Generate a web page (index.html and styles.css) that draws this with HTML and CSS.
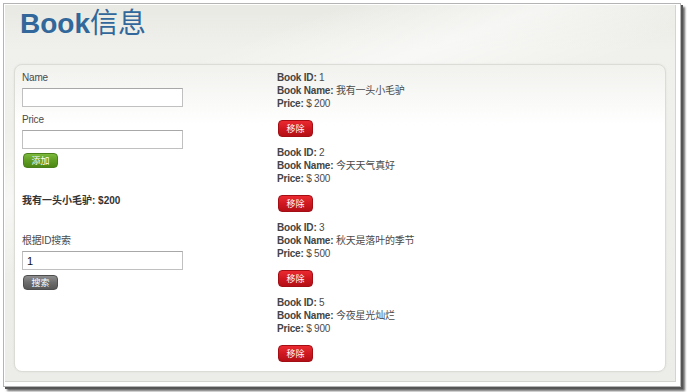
FILE: index.html
```html
<!DOCTYPE html>
<html>
<head>
<meta charset="utf-8">
<link rel="stylesheet" href="styles.css">
</head>
<body>
<div class="frame">
  <div class="page">
    <h1 class="title">Book<span class="title-cjk">信息</span></h1>
    <div class="card">
      <div class="form-col">
        <div class="label">Name</div>
        <input class="field" type="text">
        <div class="label label-next">Price</div>
        <input class="field" type="text">
        <button class="btn btn-green">添加</button>
        <div class="summary">我有一头小毛驴: $200</div>
        <div class="label label-search">根据ID搜索</div>
        <input class="field" type="text" value="1">
        <button class="btn btn-gray btn-search">搜索</button>
      </div>
      <div class="list-col">
        <div class="book">
          <div class="line"><b>Book ID:</b> 1</div>
          <div class="line"><b>Book Name:</b> 我有一头小毛驴</div>
          <div class="line"><b>Price:</b> $ 200</div>
          <button class="btn btn-red">移除</button>
        </div>
        <div class="book">
          <div class="line"><b>Book ID:</b> 2</div>
          <div class="line"><b>Book Name:</b> 今天天气真好</div>
          <div class="line"><b>Price:</b> $ 300</div>
          <button class="btn btn-red">移除</button>
        </div>
        <div class="book">
          <div class="line"><b>Book ID:</b> 3</div>
          <div class="line"><b>Book Name:</b> 秋天是落叶的季节</div>
          <div class="line"><b>Price:</b> $ 500</div>
          <button class="btn btn-red">移除</button>
        </div>
        <div class="book">
          <div class="line"><b>Book ID:</b> 5</div>
          <div class="line"><b>Book Name:</b> 今夜星光灿烂</div>
          <div class="line"><b>Price:</b> $ 900</div>
          <button class="btn btn-red">移除</button>
        </div>
      </div>
    </div>
  </div>
</div>
</body>
</html>
```
FILE: styles.css
```css
* { box-sizing: border-box; }
html, body { margin: 0; padding: 0; background: #ffffff; }
body {
  font-family: "Liberation Sans", Arial, "Noto Sans CJK SC", sans-serif;
  width: 687px;
  height: 392px;
  overflow: hidden;
}
.frame {
  margin: 3px 0 0 3px;
  width: 678px;
  height: 384px;
  border: 1px solid #b4b4b4;
  padding: 1px 4px 4px 1px;
  background: #ffffff;
  box-shadow: 2px 2px 0 #555555, 4px 4px 2px #6a6a6a;
}
.page {
  height: 100%;
  border-right: 1px solid #d4d4d0;
  border-bottom: 1px solid #d4d4d0;
  padding: 0 9px;
  background:
    linear-gradient(160deg, rgba(255,255,255,0) 20%, rgba(255,255,255,0.55) 32%, rgba(255,255,255,0) 44%),
    linear-gradient(180deg, #e9e9e4 0%, #f0f0ec 12%, #ecece8 100%);
}
.title {
  margin: 0 0 21px 6px;
  height: 38px;
  overflow: visible;
  font-size: 28px;
  line-height: 38px;
  font-weight: bold;
  color: #31679a;
}
.title-cjk {
  font-family: "Noto Sans CJK SC", sans-serif;
  font-weight: normal;
  line-height: 1;
}
.card {
  display: grid;
  grid-template-columns: 255px 1fr;
  border: 1px solid #dcdcd6;
  border-radius: 8px;
  padding: 6px 7px 9px 7px;
  background: linear-gradient(180deg, #f1f1ee 0, #f8f8f6 30px, #ffffff 60px);
  box-shadow: 0 0 2px rgba(0,0,0,0.08);
  font-size: 10px;
  line-height: 13px;
  color: #4a4a4a;
}
.form-col {
  display: flex;
  flex-direction: column;
  align-items: flex-start;
}
.label { letter-spacing: -0.2px; height: 13px; }
.label-next { margin-top: 6px; }
.label-search { margin-top: 27px; }
.field {
  margin-top: 4px;
  width: 161px;
  height: 19px;
  border: 1px solid #c0c0c0;
  border-top-color: #a8a8a8;
  padding: 0 4px;
  font-family: "Liberation Sans", Arial, sans-serif;
  font-size: 11px;
  color: #111;
  background: #fff;
  outline: none;
}
.summary {
  margin-top: 26px;
  height: 13px;
  font-weight: bold;
  color: #333;
}
.btn {
  display: block;
  width: 35px;
  padding: 0;
  border-radius: 4px;
  border: 1px solid;
  font-family: "Noto Sans CJK SC", sans-serif;
  font-size: 9px;
  line-height: 12px;
  color: #ffffff;
  cursor: pointer;
}
.btn-green {
  margin: 4px 0 0 1px;
  height: 15px;
  border-color: #4b7f1c;
  background: linear-gradient(180deg, #7cb93c 0%, #5f9d22 50%, #4c8714 100%);
}
.btn-gray {
  margin: 5px 0 0 1px;
  height: 15px;
  border-color: #4e4e4e;
  background: linear-gradient(180deg, #8e8e8e 0%, #6c6c6c 50%, #575757 100%);
}
.list-col {
  display: flex;
  flex-direction: column;
  gap: 9px;
}
.book {
  display: flex;
  flex-direction: column;
  align-items: flex-start;
}
.line { letter-spacing: -0.2px; color: #4a4a4a; height: 13px; white-space: nowrap; }
.line b { color: #444; }
.btn-red {
  margin: 10px 0 0 1px;
  height: 17px;
  border-color: #a30d14;
  background: linear-gradient(180deg, #ea2a30 0%, #d01820 50%, #b40f17 100%);
}
```
